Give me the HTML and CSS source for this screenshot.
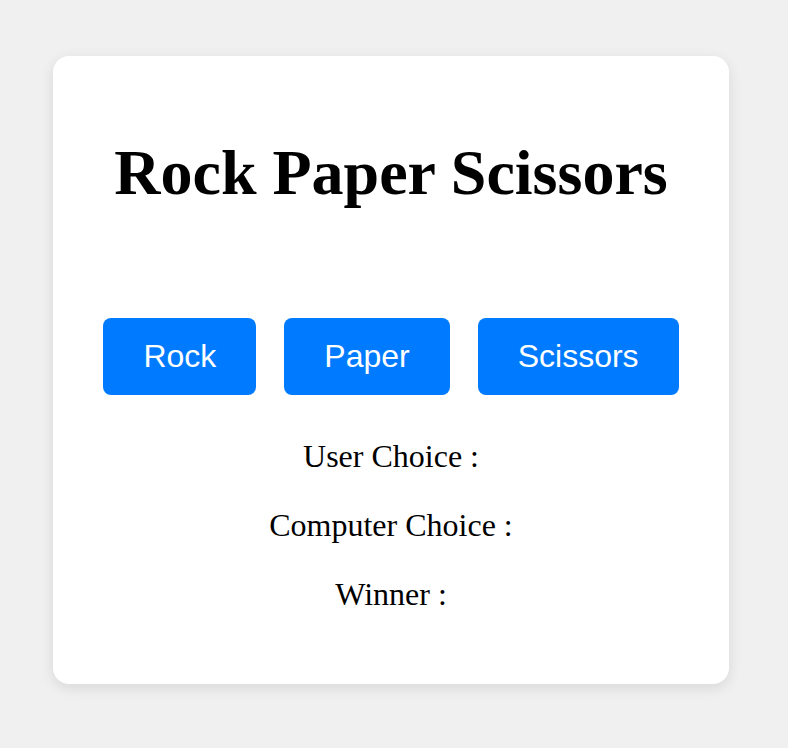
FILE: index.html
```html
<!DOCTYPE html>
<html lang="en">
<head>
<meta charset="utf-8">
<title>Rock Paper Scissors</title>
<link rel="stylesheet" href="styles.css">
</head>
<body>
<div class="card">
  <h1 class="title">Rock Paper Scissors</h1>
  <div class="choices">
    <button class="choice">Rock</button>
    <button class="choice">Paper</button>
    <button class="choice">Scissors</button>
  </div>
  <div class="results">
    <p class="result">User Choice :</p>
    <p class="result">Computer Choice :</p>
    <p class="result">Winner :</p>
  </div>
</div>
</body>
</html>
```

FILE: styles.css
```css
html, body {
  margin: 0;
  padding: 0;
}
body {
  background: #f0f0f0;
  font-family: "Liberation Serif", "Times New Roman", serif;
  color: #000;
  height: 748px;
  overflow: hidden;
}
.card {
  box-sizing: border-box;
  width: 676px;
  margin: 56px 0 0 53px;
  padding: 40px;
  background: #fff;
  border-radius: 16px;
  box-shadow: 0 4px 14px rgba(0, 0, 0, 0.1);
  text-align: center;
}
.title {
  margin: 40px 0 108px;
  font-size: 64px;
  line-height: 74px;
  font-weight: bold;
}
.choices {
  display: flex;
  justify-content: center;
  gap: 28px;
}
.choice {
  border: none;
  border-radius: 8px;
  background: #007bff;
  color: #fff;
  font-family: "Liberation Sans", Arial, sans-serif;
  font-size: 32px;
  line-height: 37px;
  padding: 20px 40px;
  cursor: pointer;
}
.results {
  display: flex;
  flex-direction: column;
  gap: 32px;
  margin: 43px 0 31px;
}
.result {
  margin: 0;
  font-size: 32px;
  line-height: 37px;
}
```
